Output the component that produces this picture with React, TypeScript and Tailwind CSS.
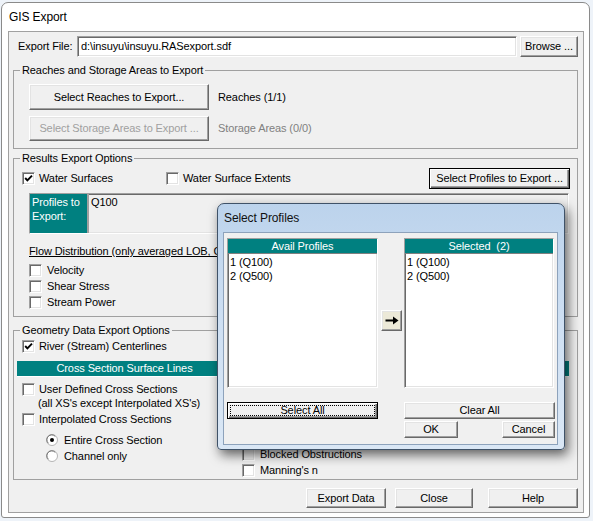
const SUNKEN =
  "border border-t-[#a0a0a0] border-l-[#a0a0a0] border-b-white border-r-white shadow-[inset_1px_1px_0_#696969,inset_-1px_-1px_0_#e3e3e3]";

function Btn({
  children,
  className = "",
  def = false,
  disabled = false,
}: {
  children?: React.ReactNode;
  className?: string;
  def?: boolean;
  disabled?: boolean;
}) {
  const edge = def
    ? "border border-black shadow-[inset_1px_1px_0_#fff,inset_-1px_-1px_0_#696969,inset_-2px_-2px_0_#a0a0a0]"
    : "border border-t-white border-l-white border-r-[#696969] border-b-[#696969] shadow-[inset_-1px_-1px_0_#a0a0a0,inset_1px_1px_0_#e3e3e3]";
  return (
    <div
      className={`flex shrink-0 items-center justify-center bg-[#f0f0f0] ${
        disabled ? "text-[#a0a0a0]" : "text-black"
      } ${edge} ${className}`}
    >
      {children}
    </div>
  );
}

function Check({ checked = false, disabled = false }: { checked?: boolean; disabled?: boolean }) {
  return (
    <span
      className={`flex h-[13px] w-[13px] shrink-0 items-center justify-center ${SUNKEN} ${
        disabled ? "bg-[#f0f0f0]" : "bg-white"
      }`}
    >
      {checked && (
        <svg width="9" height="9" viewBox="0 0 9 9">
          <path d="M1.2 4 L3.4 6.4 L8 1.6" fill="none" stroke="#000" strokeWidth="1.9" />
        </svg>
      )}
    </span>
  );
}

function CheckRow({
  label,
  checked,
  disabled,
  className = "",
}: {
  label: string;
  checked?: boolean;
  disabled?: boolean;
  className?: string;
}) {
  return (
    <div className={`flex h-[16px] items-center gap-[4px] ${className}`}>
      <Check checked={checked} disabled={disabled} />
      <span>{label}</span>
    </div>
  );
}

function Radio({ label, checked = false, className = "" }: { label: string; checked?: boolean; className?: string }) {
  return (
    <div className={`flex h-[16px] items-center gap-[6px] ${className}`}>
      <svg width="12" height="12" viewBox="0 0 12 12" className="shrink-0">
        <circle cx="6" cy="6" r="5.5" fill="#fff" stroke="#b4b4b4" />
        <path d="M2.3 9.2 A4.6 4.6 0 0 1 9.2 2.3" fill="none" stroke="#6f6f6f" />
        {checked && <circle cx="6" cy="6" r="2" fill="#000" />}
      </svg>
      <span>{label}</span>
    </div>
  );
}

function ProfileList({ title, className = "" }: { title: string; className?: string }) {
  return (
    <div className={`flex h-[150px] flex-col bg-white ${SUNKEN} ${className}`}>
      <div className="flex h-[15px] shrink-0 items-center justify-center border-b border-[#808080] bg-[#008080] text-white">
        {title}
      </div>
      <div className="pl-[2px] pt-[1px] leading-[14px]">
        <div>1 (Q100)</div>
        <div>2 (Q500)</div>
      </div>
    </div>
  );
}

function SelectProfiles() {
  return (
    <div className="absolute left-[217px] top-[203px] flex h-[247px] w-[348px] flex-col rounded-t-[7px] rounded-b-[4px] border border-[#3f5268] bg-gradient-to-b from-[#bcd3ec] via-[#cfe0f3] to-[#dae7f5] pb-[4px] pl-[5px] pr-[6px] shadow-[3px_5px_12px_rgba(0,0,0,0.6)]">
      <div className="flex h-[28px] items-center pl-[1px] text-[12px] text-[#111]">Select Profiles</div>
      <div className="flex flex-1 flex-col border border-[#8da2bb] bg-[#f0f0f0]">
        <div className="mt-[5px] flex pl-[3px]">
          <ProfileList title="Avail Profiles" className="w-[151px]" />
          <Btn className="ml-[3px] mt-[72px] h-[21px] w-[21px] !bg-[#ece9d8]">
            <svg width="14" height="9" viewBox="0 0 14 9">
              <path d="M0.5 4.5 H9" stroke="#000" strokeWidth="2" />
              <path d="M8 0.5 L13.5 4.5 L8 8.5 Z" fill="#000" />
            </svg>
          </Btn>
          <ProfileList title="Selected  (2)" className="ml-[2px] w-[150px] whitespace-pre" />
        </div>
        <div className="mt-[14px] flex pl-[3px]">
          <Btn def className="h-[17px] w-[151px] p-[2px]">
            <div className="flex h-full w-full items-center justify-center border border-dotted border-black leading-[11px]">
              Select All
            </div>
          </Btn>
          <div className="ml-[26px] flex w-[151px] flex-col">
            <Btn className="h-[17px] w-full">Clear All</Btn>
            <div className="mt-[2px] flex">
              <Btn className="h-[17px] w-[54px]">OK</Btn>
              <Btn className="ml-auto h-[17px] w-[53px]">Cancel</Btn>
            </div>
          </div>
        </div>
      </div>
    </div>
  );
}

export default function App() {
  return (
    <div className="relative h-[521px] w-[593px] overflow-hidden bg-[#eef3f9] font-['Liberation_Sans',Arial,sans-serif] text-[11px] leading-[13px] tracking-[-0.1px] text-black">
      <div className="ml-[1px] mt-[2px] flex h-[516px] w-[589px] flex-col rounded-t-[7px] rounded-b-[3px] border border-[#8a8a8a] bg-white pb-[4px] pl-[6px] pr-[5px]">
        <div className="flex h-[28px] items-center pl-[1px] text-[12px]">GIS Export</div>
        <div className="flex flex-1 flex-col border border-[#a0a0a0] bg-[#f0f0f0]">
          {/* export file row */}
          <div className="mt-[4px] flex h-[21px] items-center pl-[9px]">
            <span className="w-[59px] shrink-0">Export File:</span>
            <div className={`flex h-[21px] w-[440px] items-center bg-white pl-[3px] ${SUNKEN}`}>
              {"d:\\insuyu\\insuyu.RASexport.sdf"}
            </div>
            <Btn className="ml-[3px] h-[21px] w-[58px]">Browse ...</Btn>
          </div>

          <fieldset className="ml-[4px] mt-[7px] w-[565px] border border-[#a0a0a0] pb-[7px]">
            <legend className="ml-[6px] px-[2px] leading-[13px]">Reaches and Storage Areas to Export</legend>
            <div className="mt-[7px] flex items-center pl-[15px]">
              <Btn className="h-[26px] w-[180px]">Select Reaches to Export...</Btn>
              <span className="ml-[9px]">Reaches (1/1)</span>
            </div>
            <div className="mt-[6px] flex items-center pl-[15px]">
              <Btn disabled className="h-[25px] w-[180px]">
                Select Storage Areas to Export ...
              </Btn>
              <span className="ml-[9px] text-[#808080]">Storage Areas (0/0)</span>
            </div>
          </fieldset>

          <fieldset className="ml-[4px] mt-[3px] w-[565px] border border-[#a0a0a0] pb-[6px]">
            <legend className="ml-[6px] px-[2px] leading-[13px]">Results Export Options</legend>
            <div className="mt-[3px] flex h-[21px] items-center pl-[8px] pr-[7px]">
              <CheckRow label="Water Surfaces" checked className="w-[144px]" />
              <CheckRow label="Water Surface Extents" />
              <Btn def className="ml-auto h-[21px] w-[141px]">
                Select Profiles to Export ...
              </Btn>
            </div>
            <div className={`ml-[15px] mt-[4px] flex h-[41px] w-[540px] ${SUNKEN}`}>
              <div className="w-[59px] shrink-0 border-r-2 border-[#a0a0a0] bg-[#008080] pl-[2px] pt-[1px] leading-[14px] text-white">
                Profiles to
                <br />
                Export:
              </div>
              <div className="flex-1 pl-[2px] pt-[1px] leading-[14px]">Q100</div>
            </div>
            {/* the rest of this line sits under the Select Profiles window */}
            <div className="ml-[15px] mt-[11px] w-[188px] overflow-hidden whitespace-nowrap underline">
              Flow Distribution (only averaged LOB, Channel, ROB)
            </div>
            <div className="ml-[15px] mt-[4px]">
              <CheckRow label="Velocity" className="gap-[5px]" />
              <CheckRow label="Shear Stress" className="gap-[5px]" />
              <CheckRow label="Stream Power" className="gap-[5px]" />
            </div>
          </fieldset>

          <fieldset className="ml-[4px] mt-[7px] w-[565px] border border-[#a0a0a0] pb-[1px]">
            <legend className="ml-[6px] px-[2px] leading-[13px]">Geometry Data Export Options</legend>
            <CheckRow label="River (Stream) Centerlines" checked className="mt-[1px] pl-[8px]" />
            <div className="mt-[7px] flex pl-[3px] pr-[8px]">
              <div className="flex h-[16px] w-[215px] items-center justify-center border-b border-white bg-[#008080] text-white">
                Cross Section Surface Lines
              </div>
              <div className="ml-auto h-[16px] w-[331px] border-b border-white bg-[#008080]" />
            </div>
            <div className="flex pl-[8px]">
              <div className="w-[220px] shrink-0">
                <CheckRow label="User Defined Cross Sections" className="mt-[4px]" />
                <div className="pl-[16px]">(all XS's except Interpolated XS's)</div>
                <CheckRow label="Interpolated Cross Sections" className="mt-[1px]" />
                <Radio label="Entire Cross Section" checked className="mt-[5px] pl-[24px]" />
                <Radio label="Channel only" className="pl-[24px]" />
              </div>
              <div className="mt-[69px] flex flex-col">
                <CheckRow label="Blocked Obstructions" disabled className="gap-[5px]" />
                <CheckRow label="Manning's n" className="gap-[5px]" />
              </div>
            </div>
          </fieldset>

          <div className="mt-[8px] flex justify-end pr-[5px]">
            <Btn className="h-[20px] w-[80px]">Export Data</Btn>
            <Btn className="ml-[9px] h-[20px] w-[78px]">Close</Btn>
            <Btn className="ml-[15px] h-[20px] w-[90px]">Help</Btn>
          </div>
        </div>
      </div>
      <SelectProfiles />
    </div>
  );
}
